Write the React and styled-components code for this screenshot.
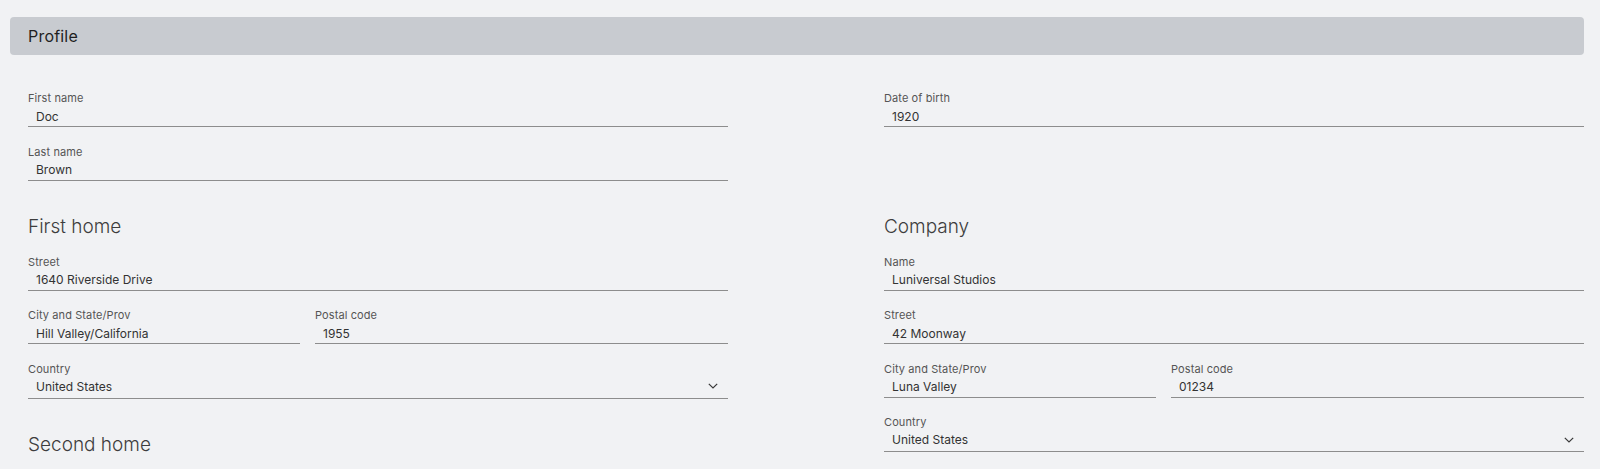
import React from "react";
import styled, { createGlobalStyle } from "styled-components";

const Global = createGlobalStyle`
  html, body { margin: 0; padding: 0; background: #f1f2f4; }
  body { font-family: Inter, "Noto Sans", "Liberation Sans", sans-serif; color: #262626; }
  * { box-sizing: border-box; }
`;

const Page = styled.div`
  padding: 17px 16px 0 10px;
  background: #f1f2f4;
  min-height: 469px;
`;

const Header = styled.header`
  height: 38px;
  display: flex;
  align-items: center;
  padding-left: 18px;
  background: #c8cbd0;
  border-radius: 4px;
  font-size: 16px;
  color: #1f1f1f;
  letter-spacing: 0.2px;
`;

const Form = styled.form`
  display: grid;
  grid-template-columns: 700px 700px;
  justify-content: space-between;
  padding: 35px 0 0 18px;
`;

const Column = styled.div`
  display: flex;
  flex-direction: column;
  gap: ${(p) => (p.$tight ? "0" : "16.5px")};
`;

const Section = styled.section`
  display: flex;
  flex-direction: column;
  gap: 16.5px;
  padding-top: 34px;
`;

const Heading = styled.h2`
  margin: 0 0 -1.5px;
  font-size: 19px;
  line-height: 24px;
  font-weight: 300;
  color: #3d3d3d;
`;

const Field = styled.label`
  display: flex;
  flex-direction: column;
  gap: 1px;
  min-width: 0;
`;

const Label = styled.span`
  font-size: 11px;
  line-height: 16px;
  color: #555555;
  letter-spacing: 0.1px;
`;

const Input = styled.input`
  height: 20px;
  padding: 0 8px 1px;
  border: none;
  border-bottom: 1px solid #8d8d8d;
  background: transparent;
  font: inherit;
  font-size: 12px;
  color: #333333;
  outline: none;
  width: 100%;
`;

const SelectBox = styled.div`
  height: 21px;
  display: flex;
  align-items: center;
  justify-content: space-between;
  padding: 0 10px 3px 8px;
  border-bottom: 1px solid #8d8d8d;
  font-size: 12px;
  color: #333333;
`;

const Pair = styled.div`
  display: grid;
  grid-template-columns: 272px 1fr;
  gap: 15px;
`;

const Chevron = () => (
  <svg width="10" height="6" viewBox="0 0 10 6" fill="none">
    <polyline points="0.8,0.8 5,5 9.2,0.8" stroke="#393939" strokeWidth="1.2" />
  </svg>
);

const TextField = ({ label, value }) => (
  <Field>
    <Label>{label}</Label>
    <Input defaultValue={value} readOnly />
  </Field>
);

const SelectField = ({ label, value }) => (
  <Field as="div">
    <Label>{label}</Label>
    <SelectBox>
      <span>{value}</span>
      <Chevron />
    </SelectBox>
  </Field>
);

export default function App() {
  return (
    <>
      <Global />
      <Page>
        <Header>Profile</Header>
        <Form onSubmit={(e) => e.preventDefault()}>
          <Column>
            <TextField label="First name" value="Doc" />
            <TextField label="Last name" value="Brown" />
          </Column>
          <Column>
            <TextField label="Date of birth" value="1920" />
          </Column>
          <Column $tight>
            <Section>
              <Heading>First home</Heading>
              <TextField label="Street" value="1640 Riverside Drive" />
              <Pair>
                <TextField label="City and State/Prov" value="Hill Valley/California" />
                <TextField label="Postal code" value="1955" />
              </Pair>
              <SelectField label="Country" value="United States" />
            </Section>
            <Section>
              <Heading>Second home</Heading>
            </Section>
          </Column>
          <Column $tight>
            <Section>
              <Heading>Company</Heading>
              <TextField label="Name" value="Luniversal Studios" />
              <TextField label="Street" value="42 Moonway" />
              <Pair>
                <TextField label="City and State/Prov" value="Luna Valley" />
                <TextField label="Postal code" value="01234" />
              </Pair>
              <SelectField label="Country" value="United States" />
            </Section>
          </Column>
        </Form>
      </Page>
    </>
  );
}
